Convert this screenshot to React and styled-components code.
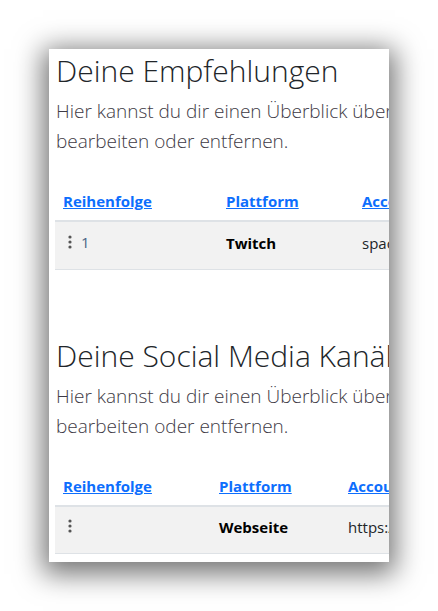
import React from "react"
import styled, { createGlobalStyle } from "styled-components"

const GlobalStyle = createGlobalStyle`
  html, body {
    margin: 0;
    padding: 0;
    background: #ffffff;
  }
  body {
    font-family: "Open Sans", "Liberation Sans", sans-serif;
    color: #212529;
  }
`

const sections = [
  {
    title: "Deine Empfehlungen",
    widths: [163, 136],
    rows: [{ order: "1", platform: "Twitch", account: "spacebar_live" }],
  },
  {
    title: "Deine Social Media Kanäle",
    widths: [156, 129],
    rows: [{ order: "", platform: "Webseite", account: "https://www.example.de" }],
  },
]

const Kebab = () => (
  <svg width="4" height="14" viewBox="0 0 4 14">
    <circle cx="2" cy="2" r="1.6" fill="#555" />
    <circle cx="2" cy="7" r="1.6" fill="#555" />
    <circle cx="2" cy="12" r="1.6" fill="#555" />
  </svg>
)

const App = () => {
  return (
    <>
      <GlobalStyle />
      <Page>
        <Panel>
          <Content>
            {sections.map((s, i) => (
              <Section key={s.title} first={i === 0}>
                <Heading>{s.title}</Heading>
                <Lead>
                  Hier kannst du dir einen Überblick über deine Einträge verschaffen und diese
                  <br />
                  bearbeiten oder entfernen.
                </Lead>
                <Table>
                  <thead>
                    <tr>
                      <Th w={s.widths[0]}><SortLink href="#">Reihenfolge</SortLink></Th>
                      <Th w={s.widths[1]}><SortLink href="#">Plattform</SortLink></Th>
                      <Th><SortLink href="#">Account</SortLink></Th>
                    </tr>
                  </thead>
                  <tbody>
                    {s.rows.map((r) => (
                      <Row key={r.platform}>
                        <Td>
                          <Handle>
                            <Kebab />
                            {r.order && <Order>{r.order}</Order>}
                          </Handle>
                        </Td>
                        <Td bold>{r.platform}</Td>
                        <Td>{r.account}</Td>
                      </Row>
                    ))}
                  </tbody>
                </Table>
              </Section>
            ))}
          </Content>
        </Panel>
      </Page>
    </>
  )
}

export default App

const Page = styled.div`
  width: 438px;
  height: 611px;
  padding: 49px 0 0 49px;
  box-sizing: border-box;
`
const Panel = styled.div`
  width: 340px;
  height: 513px;
  background: #fff;
  overflow: hidden;
  box-shadow: 0 6px 26px 6px rgba(0, 0, 0, 0.55);
`
const Content = styled.div`
  width: 900px;
  padding: 0 6px;
`
const Section = styled.section`
  margin-top: ${(p) => (p.first ? "3px" : "67px")};
`
const Heading = styled.h2`
  margin: 0;
  font-size: 30px;
  font-weight: 300;
  line-height: 38px;
  color: #212529;
  padding-left: 1px;
`
const Lead = styled.p`
  margin: 6px 0 0;
  font-size: 19px;
  font-weight: 300;
  line-height: 30px;
  color: #3e3a45;
  padding-left: 1px;
  white-space: nowrap;
`
const Table = styled.table`
  margin-top: 25px;
  border-collapse: collapse;
  width: 600px;
  font-size: 15px;
`
const Th = styled.th`
  width: ${(p) => (p.w ? `${p.w - 16}px` : "auto")};
  text-align: left;
  padding: 8px 8px 7px;
  border-bottom: 2px solid #dee2e6;
  line-height: 24px;
`
const SortLink = styled.a`
  color: #0d6efd;
  font-weight: 700;
  text-decoration: underline;
`
const Row = styled.tr`
  background: #f2f2f2;
  border-bottom: 1px solid #dee2e6;
`
const Td = styled.td`
  padding: 8px 8px 14px;
  line-height: 24px;
  font-weight: ${(p) => (p.bold ? 700 : 400)};
  color: ${(p) => (p.bold ? "#000" : "#212529")};
  white-space: nowrap;
`
const Handle = styled.span`
  display: inline-flex;
  align-items: center;
  gap: 9px;
  padding-left: 5px;
`
const Order = styled.span`
  color: #4a6585;
`
